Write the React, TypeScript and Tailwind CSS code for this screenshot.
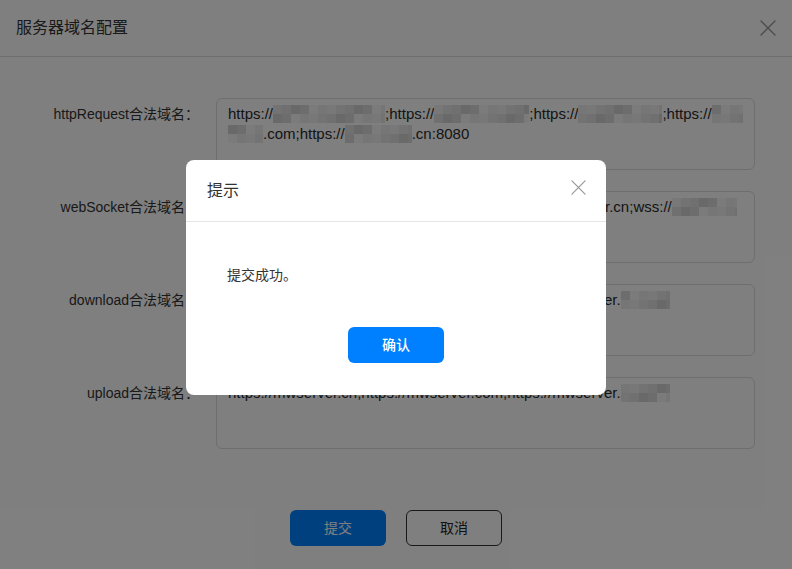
import type { ReactNode } from "react";

const shades = [
  "bg-[#e6e6e6]",
  "bg-[#dadada]",
  "bg-[#f0f0f0]",
  "bg-[#d2d2d2]",
  "bg-[#ececec]",
  "bg-[#e0e0e0]",
  "bg-[#f6f6f6]",
];

// pixelated block standing in for a masked domain
function Blur({ w, seed = 0 }: { w: number; seed?: number }) {
  const cols = Math.max(1, Math.ceil(w / 9));
  return (
    <span className="inline-flex flex-col align-middle h-[18px] overflow-hidden -mt-[2px]" style={{ width: w }}>
      {[0, 1].map((r) => (
        <span key={r} className="flex h-[9px]">
          {Array.from({ length: cols }).map((_, c) => (
            <span key={c} className={`w-[9px] h-[9px] shrink-0 ${shades[(c * 5 + r * 3 + seed) % shades.length]}`} />
          ))}
        </span>
      ))}
    </span>
  );
}

function XIcon({ size, stroke }: { size: number; stroke: number }) {
  return (
    <svg width={size} height={size} viewBox="0 0 16 16" fill="none" stroke="currentColor" strokeWidth={stroke} strokeLinecap="round">
      <path d="M1 1 L15 15 M15 1 L1 15" />
    </svg>
  );
}

const latin = "font-['Liberation_Sans','Noto_Sans_CJK_SC',sans-serif]";

function Field({ label, children }: { label: string; children: ReactNode }) {
  return (
    <div className="flex gap-4">
      <div className="w-[199px] text-right text-[14px] leading-5 pt-[6px] text-[#333]">{label}</div>
      <div className="ml-[1px] w-[539px] h-[72px] border border-[#dcdcdc] rounded-md px-[11px] py-[5px] text-[15px] leading-5 text-[#2a2a2a] overflow-hidden">
        {children}
      </div>
    </div>
  );
}

export default function App() {
  return (
    <div className={`relative w-[792px] h-[569px] bg-white overflow-hidden ${latin}`}>
      <div className="flex items-center justify-between h-[57px] px-4 border-b border-[#dcdcdc]">
        <span className="text-[16px] text-[#333]">服务器域名配置</span>
        <span className="text-[#999]"><XIcon size={16} stroke={1.3} /></span>
      </div>

      <div className="flex flex-col gap-[21px] pt-[41px]">
        <Field label="httpRequest合法域名：">
          <div className="whitespace-nowrap">
            https://<Blur w={112} />;https://<Blur w={95} seed={2} />;https://<Blur w={84} seed={4} />;https://<Blur w={31} seed={1} />
          </div>
          <div className="whitespace-nowrap">
            <Blur w={35} seed={3} />.com;https://<Blur w={67} seed={5} />.cn:8080
          </div>
        </Field>
        <Field label="webSocket合法域名：">
          <div className="whitespace-nowrap">
            wss://<Blur w={97} />;wss://mwserver.com;wss://mwserver.cn;wss://<Blur w={65} seed={2} />
          </div>
        </Field>
        <Field label="download合法域名：">
          <div className="whitespace-nowrap">
            https://mwserver.cn;https://mwserver.com;https://mwserver.<Blur w={49} seed={1} />
          </div>
        </Field>
        <Field label="upload合法域名：">
          <div className="whitespace-nowrap">
            https://mwserver.cn;https://mwserver.com;https://mwserver.<Blur w={49} seed={4} />
          </div>
        </Field>
      </div>

      <div className="flex justify-center gap-5 mt-[61px]">
        <button className="w-[96px] h-[36px] rounded-md bg-[#0080ff] text-white text-[14px]">提交</button>
        <button className="w-[96px] h-[36px] rounded-md border border-[#333] text-[#222] text-[14px]">取消</button>
      </div>

      <div className="absolute inset-0 bg-black/50">
        <div className="mx-auto mt-[160px] w-[420px] bg-white rounded-lg">
          <div className="flex items-center justify-between h-[62px] pl-[21px] pr-[20px] border-b border-[#e5e5e5]">
            <span className="text-[16px] text-[#333]">提示</span>
            <span className="text-[#999] -mt-[6px]"><XIcon size={15} stroke={1.3} /></span>
          </div>
          <div className="pt-[43px] pb-[32px]">
            <div className="pl-[41px] text-[14px] leading-5 text-[#333]">提交成功。</div>
            <div className="flex justify-center mt-[42px]">
              <button className="w-[96px] h-[36px] rounded-md bg-[#0080ff] text-white text-[14px] font-medium">确认</button>
            </div>
          </div>
        </div>
      </div>
    </div>
  );
}
